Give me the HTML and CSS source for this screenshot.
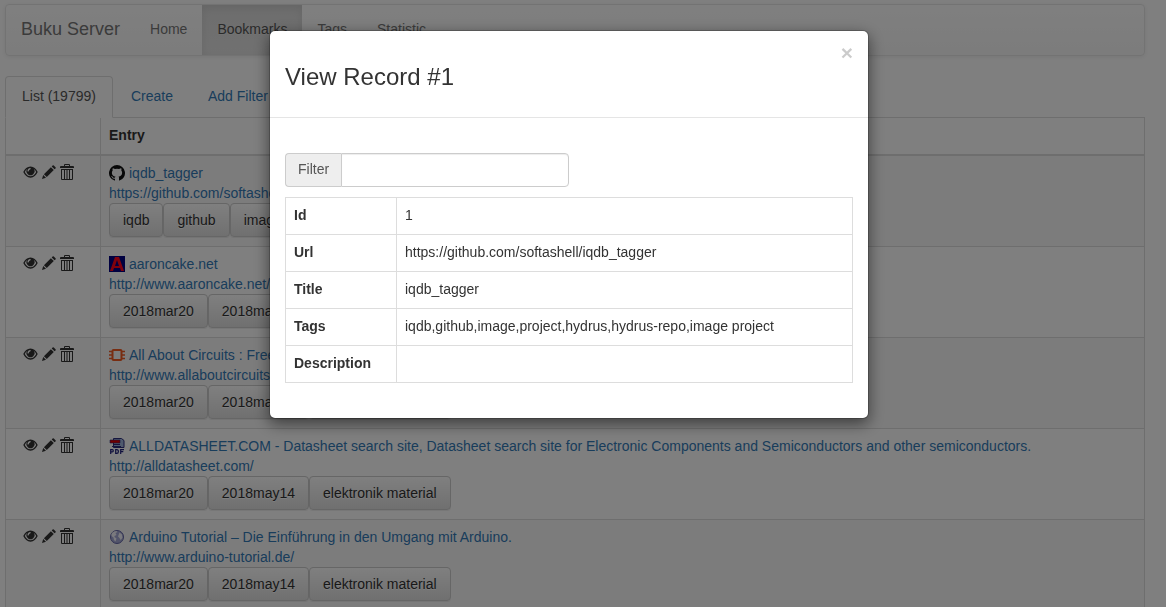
FILE: index.html
```html
<!DOCTYPE html>
<html lang="en">
<head>
<meta charset="utf-8">
<title>Buku Server - Bookmarks</title>
<link rel="stylesheet" href="styles.css">
</head>
<body>
<svg class="sprite" aria-hidden="true">
  <symbol id="eye" viewBox="0 0 16 12"><path fill-rule="evenodd" d="M8 0C4.500 0 2 2.300.3 6 2 9.700 4.500 12 8 12s6-2.300 7.700-6C14 2.300 11.500 0 8 0zM1.900 6.100C2.500 4.600 3.400 3.400 4.500 2.600a4.300 4.300 0 1 0 7 0C12.600 3.400 13.500 4.600 14.100 6.100 12.600 9 10.500 10.600 8 10.600S3.400 9 1.900 6.100zM7.600 1.800c1 0 .8 1.300 0 1.500-.8.200-1.200.8-1.400 1.600-.3 1-1.600.7-1.400-.3.300-1.600 1.300-2.700 2.800-2.800z"/></symbol>
  <symbol id="pencil" viewBox="0 0 14 14"><path d="M0 14l1.200-4 2.800 2.800zM1.900 9.200l7-7 2.900 2.900-7 7zM9.700 1.400l.9-.9q.6-.6 1.200 0l1.700 1.700q.6.600 0 1.200l-.9.900z"/></symbol>
  <symbol id="trash" viewBox="0 0 14 16"><path fill-rule="evenodd" d="M4 2V1q0-1 1-1h4q1 0 1 1v1h3q1 0 1 1v1H0V3q0-1 1-1zM5 1v1h4V1zM1 5h12v10q0 1-1 1H2q-1 0-1-1zM2 6v9h2V6zM5 6v9h1.500V6zM7.500 6v9H9V6zM10 6v9h2V6z"/></symbol>
</svg>

<nav class="navbar">
  <a class="brand" href="#">Buku Server</a>
  <a class="nav-link" href="#">Home</a>
  <a class="nav-link active" href="#">Bookmarks</a>
  <a class="nav-link" href="#">Tags</a>
  <a class="nav-link" href="#">Statistic</a>
</nav>

<div class="tabs">
  <a class="tab active" href="#">List (19799)</a>
  <a class="tab" href="#">Create</a>
  <a class="tab" href="#">Add Filter</a>
</div>

<table class="table list">
  <thead><tr><th class="actions-col"></th><th>Entry</th></tr></thead>
  <tbody>
    <tr>
      <td class="actions-col"><div class="actions">
        <a href="#" aria-label="View"><svg class="eye"><use href="#eye"/></svg></a>
        <a href="#" aria-label="Edit"><svg class="pencil"><use href="#pencil"/></svg></a>
        <button type="button" aria-label="Delete"><svg class="trash"><use href="#trash"/></svg></button>
      </div></td>
      <td>
        <div class="entry"><svg class="favicon" viewBox="0 0 16 16"><path fill="#111" d="M8 0a8 8 0 0 0-2.500 15.600c.4.100.5-.2.500-.4v-1.500c-2.200.5-2.700-.9-2.700-.9-.4-.9-.9-1.200-.9-1.200-.7-.5.100-.5.100-.5.800.1 1.200.8 1.200.8.700 1.200 1.900.9 2.300.7.100-.5.300-.9.500-1.100-1.800-.2-3.600-.9-3.600-4 0-.9.300-1.600.8-2.100-.1-.2-.4-1 .1-2.100 0 0 .7-.2 2.200.8a7.500 7.500 0 0 1 4 0c1.500-1 2.200-.8 2.200-.8.500 1.100.2 1.900.1 2.100.5.500.8 1.200.8 2.100 0 3.100-1.800 3.800-3.600 4 .3.200.5.700.5 1.500v2.200c0 .2.100.5.500.4A8 8 0 0 0 8 0z"/></svg><a href="#">iqdb_tagger</a></div>
        <div><a href="#">https://github.com/softashell/iqdb_tagger</a></div>
        <div class="tags"><a class="btn" href="#">iqdb</a><a class="btn" href="#">github</a><a class="btn" href="#">image</a></div>
      </td>
    </tr>
    <tr>
      <td class="actions-col"><div class="actions">
        <a href="#" aria-label="View"><svg class="eye"><use href="#eye"/></svg></a>
        <a href="#" aria-label="Edit"><svg class="pencil"><use href="#pencil"/></svg></a>
        <button type="button" aria-label="Delete"><svg class="trash"><use href="#trash"/></svg></button>
      </div></td>
      <td>
        <div class="entry"><svg class="favicon" viewBox="0 0 16 16"><path fill="#000080" d="M0 0h16v16H0z"/><path fill="#ff0018" fill-rule="evenodd" d="M6 1h4l5 14h-3l-1-3H5l-1 3H1zM8 4L6 10h4z"/></svg><a href="#">aaroncake.net</a></div>
        <div><a href="#">http://www.aaroncake.net/</a></div>
        <div class="tags"><a class="btn" href="#">2018mar20</a><a class="btn" href="#">2018may14</a><a class="btn" href="#">elektronik material</a></div>
      </td>
    </tr>
    <tr>
      <td class="actions-col"><div class="actions">
        <a href="#" aria-label="View"><svg class="eye"><use href="#eye"/></svg></a>
        <a href="#" aria-label="Edit"><svg class="pencil"><use href="#pencil"/></svg></a>
        <button type="button" aria-label="Delete"><svg class="trash"><use href="#trash"/></svg></button>
      </div></td>
      <td>
        <div class="entry"><svg class="favicon" viewBox="0 0 16 16"><rect x="3.500" y="3" width="9" height="10" rx="1" fill="none" stroke="#f05a22" stroke-width="2"/><path stroke="#f05a22" stroke-width="1.500" d="M0 4.500h3M0 8h3M0 11.500h3M13 4.500h3M13 8h3M13 11.500h3"/></svg><a href="#">All About Circuits : Free</a></div>
        <div><a href="#">http://www.allaboutcircuits.com/</a></div>
        <div class="tags"><a class="btn" href="#">2018mar20</a><a class="btn" href="#">2018may14</a><a class="btn" href="#">elektronik material</a></div>
      </td>
    </tr>
    <tr>
      <td class="actions-col"><div class="actions">
        <a href="#" aria-label="View"><svg class="eye"><use href="#eye"/></svg></a>
        <a href="#" aria-label="Edit"><svg class="pencil"><use href="#pencil"/></svg></a>
        <button type="button" aria-label="Delete"><svg class="trash"><use href="#trash"/></svg></button>
      </div></td>
      <td>
        <div class="entry"><svg class="favicon" viewBox="0 0 16 16"><path fill="#9fb4dc" stroke="#2c2c7c" d="M4.500.5h8l2.500 2v7h-10.500z"/><path fill="#2c2c7c" d="M5 6h6v1H5zM3 8h9v1H3z"/><path fill="#e00000" stroke="#2c2c7c" stroke-width=".6" d="M1 2h10v3H1z"/><path fill="none" stroke="#20207c" stroke-width="1.200" d="M1.700 16v-4.400h1.600q1 0 1 1.100t-1 1.100H1.700M6.700 11.600v3.800h1q1.700 0 1.700-1.900t-1.700-1.900zM11.700 16v-4.400H15M11.700 13.700h2.600"/></svg><a href="#">ALLDATASHEET.COM - Datasheet search site, Datasheet search site for Electronic Components and Semiconductors and other semiconductors.</a></div>
        <div><a href="#">http://alldatasheet.com/</a></div>
        <div class="tags"><a class="btn" href="#">2018mar20</a><a class="btn" href="#">2018may14</a><a class="btn" href="#">elektronik material</a></div>
      </td>
    </tr>
    <tr>
      <td class="actions-col"><div class="actions">
        <a href="#" aria-label="View"><svg class="eye"><use href="#eye"/></svg></a>
        <a href="#" aria-label="Edit"><svg class="pencil"><use href="#pencil"/></svg></a>
        <button type="button" aria-label="Delete"><svg class="trash"><use href="#trash"/></svg></button>
      </div></td>
      <td>
        <div class="entry"><svg class="favicon" viewBox="0 0 16 16"><circle cx="8" cy="8" r="6.500" fill="#a4a8d4" stroke="#6264a4"/><path fill="#f4f4fc" d="M3 4q2-2 4.500-2l1 1-2 1 1 2-2 1v1l2 1.500-1 3-1.500-1.500-.5-2.500-2-1.500q-.3-1.500.5-3zM10.500 3.500l2.500 2 .5 3.500-2 2-1-2-1.500-1.500z"/></svg><a href="#">Arduino Tutorial – Die Einführung in den Umgang mit Arduino.</a></div>
        <div><a href="#">http://www.arduino-tutorial.de/</a></div>
        <div class="tags"><a class="btn" href="#">2018mar20</a><a class="btn" href="#">2018may14</a><a class="btn" href="#">elektronik material</a></div>
      </td>
    </tr>
  </tbody>
</table>

<div class="modal-layer">
  <div class="modal" role="dialog" aria-modal="true" aria-labelledby="modal-title">
    <div class="modal-header">
      <h3 id="modal-title">View Record #1</h3>
      <button class="close" type="button" aria-label="Close">×</button>
    </div>
    <div class="modal-body">
      <div class="filter">
        <label for="filter">Filter</label>
        <input id="filter" type="text">
      </div>
      <table class="table details">
        <tbody>
          <tr><th scope="row">Id</th><td>1</td></tr>
          <tr><th scope="row">Url</th><td>https://github.com/softashell/iqdb_tagger</td></tr>
          <tr><th scope="row">Title</th><td>iqdb_tagger</td></tr>
          <tr><th scope="row">Tags</th><td>iqdb,github,image,project,hydrus,hydrus-repo,image project</td></tr>
          <tr><th scope="row">Description</th><td></td></tr>
        </tbody>
      </table>
    </div>
  </div>
</div>
</body>
</html>
```

FILE: styles.css
```css
* { box-sizing: border-box; }

body {
  margin: 0;
  padding: 4px 21px 0 5px;
  overflow: hidden;
  background: #fff;
  color: #333;
  font: 14px/20px "Liberation Sans", Arial, sans-serif;
}

a { color: #337ab7; text-decoration: none; }
.sprite { display: none; }

/* Top navigation */
.navbar {
  display: flex;
  margin-bottom: 20px;
  border: 1px solid #e7e7e7;
  border-radius: 4px;
  background: linear-gradient(#fff, #f8f8f8);
  box-shadow: inset 0 1px 0 rgba(255, 255, 255, .15), 0 1px 5px rgba(0, 0, 0, .075);
}
.brand, .nav-link {
  padding: 14px 15px 16px;
  color: #777;
  text-shadow: 0 1px 0 rgba(255, 255, 255, .25);
}
.brand { font-size: 18px; }
.nav-link.active {
  color: #555;
  background: linear-gradient(#dbdbdb, #e2e2e2);
  box-shadow: inset 0 3px 9px rgba(0, 0, 0, .075);
}

/* Tabs */
.tabs {
  display: flex;
  gap: 1px;
  border-bottom: 1px solid #ddd;
}
.tab {
  margin-bottom: -1px;
  padding: 9px 16px 11px;
  border: 1px solid transparent;
  border-radius: 4px 4px 0 0;
}
.tab.active {
  color: #555;
  background: #fff;
  border-color: #ddd #ddd #fff;
}

/* Tables */
.table {
  width: 100%;
  border-collapse: collapse;
}
.table th, .table td {
  padding: 7px 8px 9px;
  border: 1px solid #ddd;
  text-align: left;
  vertical-align: top;
}
.list { border-top: 0; }
.list thead th { border-top: 0; border-bottom-width: 2px; }
.list tbody tr:nth-child(odd) { background: #f9f9f9; }
.list .actions-col { width: 95px; }

.actions {
  display: flex;
  align-items: center;
  gap: 4px;
  height: 18px;
  padding-left: 9px;
}
.actions a, .actions button {
  display: flex;
  padding: 0;
  border: 0;
  background: none;
}
.actions svg { fill: #333; }
.eye { width: 15px; height: 12px; }
.pencil { width: 14px; height: 14px; }
.trash { width: 14px; height: 16px; }

.entry {
  display: flex;
  align-items: center;
  gap: 4px;
}
.favicon { width: 16px; height: 16px; }

.tags { display: flex; }
.btn {
  padding: 6px 13px;
  border: 1px solid #ccc;
  border-radius: 4px;
  background: linear-gradient(#fff, #e0e0e0);
  box-shadow: inset 0 1px 0 rgba(255, 255, 255, .15), 0 1px 1px rgba(0, 0, 0, .075);
  color: #333;
  text-shadow: 0 1px 0 #fff;
}

/* Record dialog over the dimmed page */
.modal-layer {
  position: fixed;
  inset: 0;
  padding: 30px 28px 30px 0;
  background: rgba(0, 0, 0, .5);
}
.modal {
  max-width: 600px;
  margin: 0 auto;
  border: 1px solid rgba(0, 0, 0, .2);
  border-radius: 6px;
  background: #fff;
  background-clip: padding-box;
  box-shadow: 0 5px 15px rgba(0, 0, 0, .5);
}
.modal-header {
  display: flex;
  justify-content: space-between;
  align-items: flex-start;
  padding: 13px 15px 17px;
  border-bottom: 1px solid #e5e5e5;
}
.modal-header h3 {
  margin: 20px 0 10px;
  font-size: 24px;
  font-weight: 500;
  line-height: 26px;
}
.close {
  margin-top: -2px;
  padding: 0;
  border: 0;
  background: none;
  color: #000;
  font: bold 21px/21px "Liberation Sans", Arial, sans-serif;
  text-shadow: 0 1px 0 #fff;
  opacity: .2;
}
.modal-body { padding: 35px 15px; }
.filter {
  display: flex;
  width: 50%;
  height: 34px;
  margin-bottom: 10px;
}
.filter label {
  padding: 5px 12px 7px;
  border: 1px solid #ccc;
  border-right: 0;
  border-radius: 4px 0 0 4px;
  background: #eee;
  color: #555;
}
.filter input {
  flex: 1;
  min-width: 0;
  padding: 6px 12px;
  border: 1px solid #ccc;
  border-radius: 0 4px 4px 0;
  box-shadow: inset 0 1px 1px rgba(0, 0, 0, .075);
  color: #555;
  font: inherit;
}
.details th { width: 111px; }
```
